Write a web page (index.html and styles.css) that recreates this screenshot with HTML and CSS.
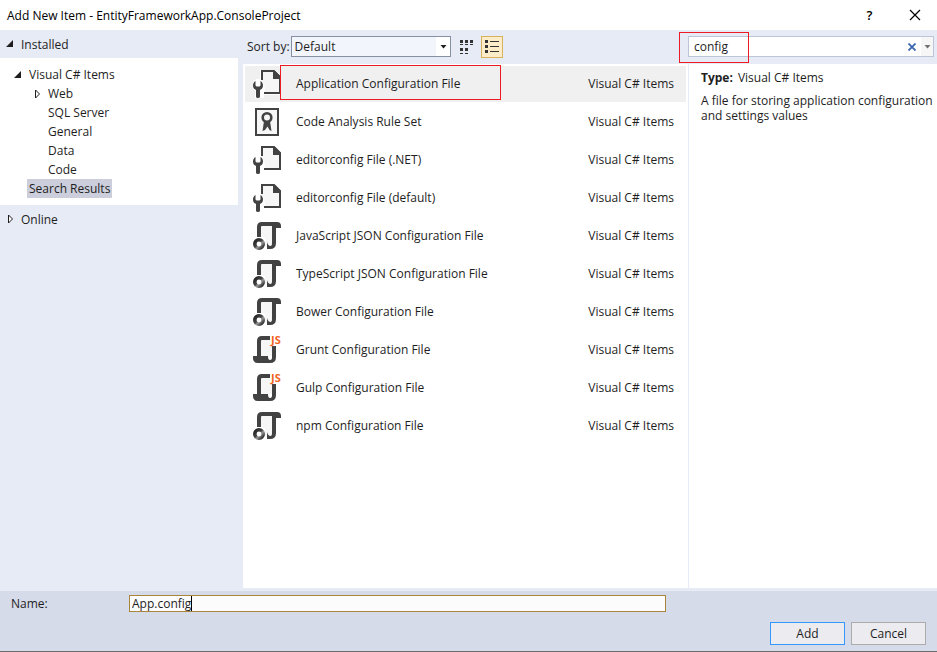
FILE: index.html
```html
<!DOCTYPE html>
<html lang="en">
<head>
  <meta charset="UTF-8" />
  <meta name="viewport" content="width=device-width, initial-scale=1.0"/>
  <title>Add New Item</title>
  <link rel="stylesheet" href="styles.css">
</head>
<body>
  <!-- shared icons -->
  <svg class="defs" width="0" height="0" aria-hidden="true">
    <defs>
      <linearGradient id="ring" x1="0" y1="0" x2="1" y2="1">
        <stop offset="0" stop-color="#222"/>
        <stop offset="0.45" stop-color="#444"/>
        <stop offset="0.6" stop-color="#999"/>
        <stop offset="1" stop-color="#222"/>
      </linearGradient>
      <symbol id="icon-config" viewBox="0 0 28 28">
        <path d="M7 -1H22L29 6V25H11V29H2V21L-1 18V13L3 9H7Z" fill="#fff"/>
        <path d="M9 1H20V8H27V22H12V18L9 12Z" fill="#f6f6f6"/>
        <path d="M9 10V1H21L27 7V23H11" fill="none" stroke="#424242" stroke-width="2"/>
        <path d="M20 1H22L28 7V9H20Z" fill="#424242"/>
        <path d="M2.500 11C0.800 12 0 13.500 0 15.500C0 18 1.300 19.300 3 20V26.500Q3 28 5 28T7 26.500V20C8.700 19.300 10 18 10 15.500C10 13.500 9.200 12 7.500 11V15.500L6.500 16.500H3.500L2.500 15.500Z" fill="#424242"/>
      </symbol>
      <symbol id="icon-rules" viewBox="0 0 28 28">
        <rect x="3" y="1" width="22" height="26" fill="#f6f6f6" stroke="#424242" stroke-width="2"/>
        <path d="M11 13H17L18.500 23L16.500 22L14.500 18.500L12 22L9.500 23Z" fill="#424242"/>
        <circle cx="14" cy="9.500" r="4.300" fill="#f6f6f6" stroke="#424242" stroke-width="2.600"/>
      </symbol>
      <symbol id="icon-json" viewBox="0 0 28 28">
        <path d="M8 3H20V24H12V16L8 15Z" fill="#f6f6f6"/>
        <path d="M4 15V5Q4 0 9 0H24Q28 0 28 4V6H23V21Q23 27 17 27H14V20Q15 24 17.500 24Q19 24 19 21V4H9Q8 4 8 5V15Z" fill="#424242"/>
        <circle cx="6" cy="22" r="4.200" fill="#fff" stroke="url(#ring)" stroke-width="3.600"/>
      </symbol>
      <symbol id="icon-js" viewBox="0 0 28 28">
        <path d="M8 4H17V9H19V20H8Z" fill="#f6f6f6"/>
        <path d="M4 20V5Q4 0 9 0H17V4H9Q8 4 8 5V20H15Q15 24 17 24Q19 24 19 22V10H23V21Q23 27 17 27H5Q0 27 0 22V20Z" fill="#424242"/>
        <text class="js-mark" x="18" y="8">JS</text>
      </symbol>
      <symbol id="arrow-open" viewBox="0 0 8 8">
        <path d="M7 0V7H0Z" fill="#1e1e1e"/>
      </symbol>
      <symbol id="arrow-closed" viewBox="0 0 8 8">
        <path d="M2.500 0V8L6.500 4Z" fill="#fff" stroke="#1e1e1e"/>
      </symbol>
    </defs>
  </svg>

  <div class="dialog">
    <header class="titlebar">
      <h1>Add New Item - EntityFrameworkApp.ConsoleProject</h1>
      <button class="title-btn" type="button" aria-label="Help">?</button>
      <button class="title-btn" type="button" aria-label="Close">
        <svg width="12" height="12" viewBox="0 0 12 12"><path d="M1 1L11 11M11 1L1 11" stroke="#000" stroke-width="1.200"/></svg>
      </button>
    </header>

    <div class="content">
      <nav class="sidebar">
        <div class="group"><svg class="arrow"><use href="#arrow-open"/></svg>Installed</div>
        <ul class="tree">
          <li class="root"><svg class="arrow"><use href="#arrow-open"/></svg><span>Visual C# Items</span></li>
          <li class="child"><svg class="arrow"><use href="#arrow-closed"/></svg><span>Web</span></li>
          <li class="leaf"><span>SQL Server</span></li>
          <li class="leaf"><span>General</span></li>
          <li class="leaf"><span>Data</span></li>
          <li class="leaf"><span>Code</span></li>
          <li class="results"><span class="selected">Search Results</span></li>
        </ul>
        <div class="group"><svg class="arrow"><use href="#arrow-closed"/></svg>Online</div>
      </nav>

      <main class="main">
        <div class="toolbar">
          <label for="sort">Sort by:</label>
          <div class="sort-box">
            <select id="sort">
              <option>Default</option>
            </select>
            <svg class="caret" width="7" height="4" viewBox="0 0 7 4"><path d="M0.500 0H6.500L3.500 3.500Z" fill="#1e1e1e"/></svg>
          </div>
          <button class="view-btn" type="button" aria-label="Small icons">
            <svg width="14" height="14" viewBox="0 0 14 14" fill="#333">
              <path d="M0 0h3v3H0zM5 0h3v3H5zM10 0h3v3h-3zM0 8h3v3H0zM5 8h3v3H5z"/>
              <path d="M0 4h3v1H0zM5 4h3v1H5zM10 4h3v1h-3zM0 13h3v1H0zM5 13h3v1H5z"/>
            </svg>
          </button>
          <button class="view-btn active" type="button" aria-label="List">
            <svg width="14" height="14" viewBox="0 0 14 14" fill="#333">
              <path d="M0 0h3v3H0zM0 5h3v3H0zM0 10h3v3H0zM5 1h9v1H5zM5 6h9v1H5zM5 11h9v1H5z"/>
            </svg>
          </button>
        </div>

        <ul class="items">
          <li class="item current">
            <svg class="icon"><use href="#icon-config"/></svg>
            <span class="name">Application Configuration File</span><span class="kind">Visual C# Items</span>
            <div class="mark mark-item"></div>
          </li>
          <li class="item">
            <svg class="icon"><use href="#icon-rules"/></svg>
            <span class="name">Code Analysis Rule Set</span><span class="kind">Visual C# Items</span>
          </li>
          <li class="item">
            <svg class="icon"><use href="#icon-config"/></svg>
            <span class="name">editorconfig File (.NET)</span><span class="kind">Visual C# Items</span>
          </li>
          <li class="item">
            <svg class="icon"><use href="#icon-config"/></svg>
            <span class="name">editorconfig File (default)</span><span class="kind">Visual C# Items</span>
          </li>
          <li class="item">
            <svg class="icon"><use href="#icon-json"/></svg>
            <span class="name">JavaScript JSON Configuration File</span><span class="kind">Visual C# Items</span>
          </li>
          <li class="item">
            <svg class="icon"><use href="#icon-json"/></svg>
            <span class="name">TypeScript JSON Configuration File</span><span class="kind">Visual C# Items</span>
          </li>
          <li class="item">
            <svg class="icon"><use href="#icon-json"/></svg>
            <span class="name">Bower Configuration File</span><span class="kind">Visual C# Items</span>
          </li>
          <li class="item">
            <svg class="icon"><use href="#icon-js"/></svg>
            <span class="name">Grunt Configuration File</span><span class="kind">Visual C# Items</span>
          </li>
          <li class="item">
            <svg class="icon"><use href="#icon-js"/></svg>
            <span class="name">Gulp Configuration File</span><span class="kind">Visual C# Items</span>
          </li>
          <li class="item">
            <svg class="icon"><use href="#icon-json"/></svg>
            <span class="name">npm Configuration File</span><span class="kind">Visual C# Items</span>
          </li>
        </ul>
      </main>

      <aside class="details">
        <div class="toolbar">
          <div class="search">
            <input type="text" value="config" aria-label="Search">
            <button type="button" class="clear" aria-label="Clear search">
              <svg width="8" height="8" viewBox="0 0 8 8"><path d="M0.500 0.500L7.500 7.500M7.500 0.500L0.500 7.500" stroke="#3a66b0" stroke-width="1.800"/></svg>
            </button>
            <button type="button" class="drop" aria-label="Search options">
              <svg width="7" height="4" viewBox="0 0 7 4"><path d="M0.500 0H6.500L3.500 3.500Z" fill="#717171"/></svg>
            </button>
            <div class="mark mark-search"></div>
          </div>
        </div>
        <div class="info">
          <p><b>Type:</b>Visual C# Items</p>
          <p>A file for storing application configuration and settings values</p>
        </div>
      </aside>
    </div>

    <footer class="footer">
      <div class="name-row">
        <label for="name">Name:</label>
        <div class="name-box">
          <input id="name" type="text" value="App.config">
          <span class="cursor"></span>
        </div>
      </div>
      <div class="actions">
        <button type="button" class="btn primary">Add</button>
        <button type="button" class="btn">Cancel</button>
      </div>
    </footer>
  </div>
</body>
</html>
```
FILE: styles.css
```css
* {
  box-sizing: border-box;
}

body {
  margin: 0;
  font-family: "Open Sans", "Noto Sans", sans-serif;
  font-size: 12px;
  line-height: 15px;
  color: #1e1e1e;
}

ul {
  list-style: none;
  margin: 0;
  padding: 0;
}

button, input, select {
  font: inherit;
  color: inherit;
}

svg {
  display: block;
  flex: none;
}

.defs {
  position: absolute;
}

.dialog {
  display: flex;
  flex-direction: column;
  min-height: 100vh;
  background: #e6ebf5;
  border-bottom: 1px solid #6a6a6a;
}

/* title bar */
.titlebar {
  display: flex;
  align-items: center;
  height: 30px;
  padding-left: 7px;
  background: #fff;
  color: #000;
}

.titlebar h1 {
  flex: 1;
  margin: 0;
  font-size: 12px;
  font-weight: normal;
}

.title-btn {
  display: flex;
  align-items: center;
  justify-content: center;
  width: 45px;
  height: 30px;
  padding: 0;
  border: none;
  background: none;
  font-size: 13px;
  font-weight: 600;
}

/* three columns */
.content {
  flex: 1;
  display: grid;
  grid-template-columns: 243px 1fr 249px;
  padding-bottom: 3px;
}

.sidebar {
  padding-right: 5px;
}

.group {
  display: flex;
  align-items: center;
  gap: 7px;
  height: 28px;
  padding-left: 6px;
}

.arrow {
  width: 8px;
  height: 8px;
}

.tree {
  padding: 7px 0;
  background: #fff;
}

.tree li {
  display: flex;
  align-items: center;
  gap: 7px;
  height: 19px;
}

.tree .root {
  padding-left: 14px;
}

.tree .child {
  padding-left: 33px;
}

.tree .leaf {
  padding-left: 48px;
}

.tree .results {
  padding-left: 27px;
}

.selected {
  padding: 2px;
  background: #cccedb;
}

.main, .details {
  display: flex;
  flex-direction: column;
}

.toolbar {
  display: flex;
  align-items: center;
  height: 34px;
  padding: 0 3px 1px 4px;
}

.sort-box {
  position: relative;
  width: 160px;
  margin: 0 5px 0 1px;
}

.sort-box select {
  display: block;
  appearance: none;
  width: 100%;
  height: 21px;
  padding: 0 3px;
  border: 1px solid #8591a2;
  border-radius: 0;
  background: linear-gradient(to right, #f2f5fc calc(100% - 14px), #fff 0);
}

.caret {
  position: absolute;
  right: 4px;
  top: 9px;
  pointer-events: none;
}

.view-btn {
  display: flex;
  align-items: center;
  justify-content: center;
  width: 22px;
  height: 22px;
  margin-right: 3px;
  padding: 0;
  border: 1px solid transparent;
  background: none;
}

.view-btn.active {
  border-color: #d9b25f;
  background: #fdecc8;
}

/* item list */
.items {
  flex: 1;
  display: flex;
  flex-direction: column;
  gap: 2px;
  padding: 2px;
  background: #fff;
}

.item {
  position: relative;
  display: flex;
  align-items: center;
  height: 36px;
  padding: 0 12px 0 8px;
}

.item.current {
  background: #f0f0f0;
}

.icon {
  width: 28px;
  height: 28px;
  margin-right: 15px;
}

.js-mark {
  font-family: "Open Sans", sans-serif;
  font-size: 11px;
  font-weight: bold;
  fill: #f16421;
}

.name, .kind {
  padding-bottom: 2px;
}

.name {
  flex: 1;
}

/* red callout frames */
.mark {
  position: absolute;
  border: 1px solid #ed1c24;
  pointer-events: none;
}

.mark-item {
  left: 35px;
  top: -1px;
  width: 221px;
  height: 35px;
}

.mark-search {
  left: -10px;
  top: -5px;
  width: 70px;
  height: 31px;
}

/* right column */
.details .toolbar {
  padding-left: 0;
}

.search {
  position: relative;
  flex: 1;
  display: flex;
  height: 21px;
  border: 1px solid #bdc5d8;
  background: #fff;
}

.search input {
  flex: 1;
  min-width: 0;
  padding: 0 5px;
  border: none;
  background: none;
  outline: none;
}

.search button {
  display: flex;
  align-items: center;
  justify-content: center;
  padding: 0;
  border: none;
  background: none;
}

.search .clear {
  width: 18px;
}

.search .drop {
  width: 12px;
  background: #f6f6f6;
}

.info {
  flex: 1;
  padding: 6px 2px 6px 12px;
  border-left: 1px solid #e6ebf5;
  background: #fff;
}

.info p {
  margin: 0 0 8px;
}

.info b {
  margin-right: 5px;
}

/* footer */
.footer {
  padding: 4px 11px 6px;
  background: #d6dbe9;
}

.name-row {
  display: flex;
  align-items: center;
}

.name-row label {
  width: 118px;
}

.name-box {
  position: relative;
  flex: 0 1 537px;
}

.name-box input {
  display: block;
  width: 100%;
  height: 17px;
  padding: 0 2px;
  border: 1px solid #a9853b;
  background: #fcfcfc;
  outline: none;
}

.cursor {
  position: absolute;
  left: 62px;
  top: 1px;
  width: 1px;
  height: 15px;
  background: #000;
}

.actions {
  display: flex;
  justify-content: flex-end;
  gap: 6px;
  margin-top: 10px;
}

.btn {
  width: 75px;
  height: 23px;
  padding: 0;
  border: 1px solid #acacac;
  background: #ececf0;
}

.btn.primary {
  border-color: #3399ff;
}
```
